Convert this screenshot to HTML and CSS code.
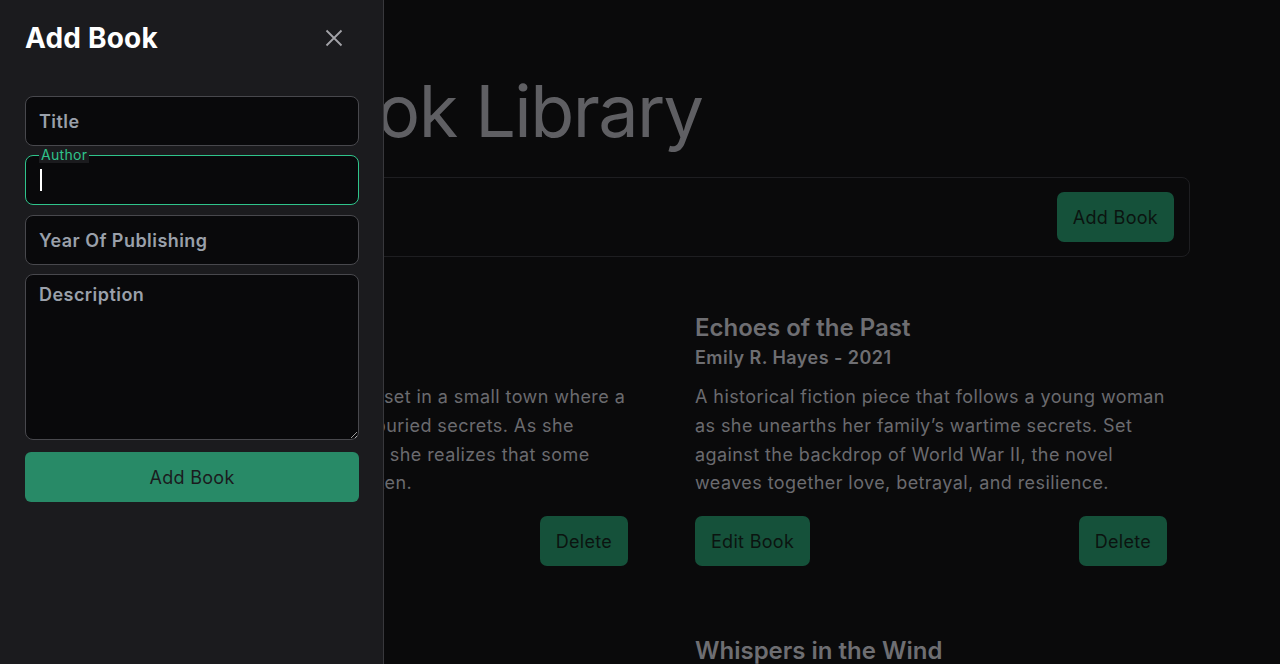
FILE: index.html
```html
<!DOCTYPE html>
<html lang="en">
<head>
<meta charset="utf-8">
<title>Book Library</title>
<link rel="stylesheet" href="styles.css">
</head>
<body>
<main class="page">
  <h1 class="page-title">Book Library</h1>
  <div class="toolbar">
    <button class="btn btn-dim">Add Book</button>
  </div>
  <section class="books">
    <article class="book">
      <h2 class="book-title">Silent Hollow</h2>
      <p class="book-meta">Mark Thompson - 2019</p>
      <p class="book-desc">A gripping mystery novel set in a small town where a journalist uncovers long buried secrets. As she delves into the mysteries, she realizes that some truths are best left forgotten.</p>
      <div class="book-actions">
        <button class="btn btn-dim">Edit Book</button>
        <button class="btn btn-dim">Delete</button>
      </div>
    </article>
    <article class="book">
      <h2 class="book-title">Echoes of the Past</h2>
      <p class="book-meta">Emily R. Hayes - 2021</p>
      <p class="book-desc">A historical fiction piece that follows a young woman as she unearths her family’s wartime secrets. Set against the backdrop of World War II, the novel weaves together love, betrayal, and resilience.</p>
      <div class="book-actions">
        <button class="btn btn-dim">Edit Book</button>
        <button class="btn btn-dim">Delete</button>
      </div>
    </article>
    <article class="book">
      <h2 class="book-title">Midnight Tide</h2>
      <p class="book-meta">Daniel K. Moore - 2018</p>
      <p class="book-desc">A tale of a lighthouse keeper on a remote island.</p>
    </article>
    <article class="book">
      <h2 class="book-title">Whispers in the Wind</h2>
      <p class="book-meta">Sarah L. Bennett - 2020</p>
      <p class="book-desc">A poetic story of loss and hope.</p>
    </article>
  </section>
</main>

<aside class="drawer">
  <header class="drawer-head">
    <h2 class="drawer-title">Add Book</h2>
    <button class="close" aria-label="Close">
      <svg width="18" height="18" viewBox="0 0 18 18"><path d="M1.5 1.5 L16.5 16.5 M16.5 1.5 L1.5 16.5" stroke="#a3a3a8" stroke-width="1.8" fill="none"/></svg>
    </button>
  </header>
  <form class="form">
    <input class="field" type="text" placeholder="Title">
    <div class="field-wrap">
      <span class="field-label">Author</span>
      <div class="field field-focus"><span class="caret"></span></div>
    </div>
    <input class="field field-year" type="text" placeholder="Year Of Publishing">
    <textarea class="field area" placeholder="Description"></textarea>
    <button type="button" class="btn btn-submit">Add Book</button>
  </form>
</aside>
</body>
</html>
```

FILE: styles.css
```css
* { box-sizing: border-box; }
html, body { margin: 0; padding: 0; }
body {
  background: #0a0a0b;
  font-family: Inter, "Noto Sans", sans-serif;
  color: #6b6b6f;
  height: 664px;
  overflow: hidden;
}
.page {
  width: 1100px;
  margin: 0 auto;
  padding-top: 63px;
}
.page-title {
  margin: 0 0 18px 200px;
  font-size: 72px;
  font-weight: 400;
  line-height: 96px;
  color: #5f5f63;
  letter-spacing: -1.6px;
}
.toolbar {
  height: 80px;
  border: 1px solid #1e1e21;
  border-radius: 8px;
  display: flex;
  justify-content: flex-end;
  align-items: center;
  padding: 0 15px;
}
.btn {
  font-family: inherit;
  font-size: 18px;
  letter-spacing: 0.3px;
  border: none;
  border-radius: 7px;
  height: 50px;
  padding: 0 16px;
  cursor: pointer;
}
.btn-dim {
  background: #15513a;
  color: #0b1410;
}
.books {
  display: grid;
  grid-template-columns: 472px 472px;
  column-gap: 67px;
  row-gap: 69px;
  padding: 55px 0 0 66px;
}
.book-title {
  margin: 0;
  font-size: 24px;
  font-weight: 600;
  line-height: 32px;
  color: #6e6e72;
}
.book-meta {
  margin: 1px 0 0;
  font-size: 18px;
  font-weight: 600;
  line-height: 26px;
  letter-spacing: 0.45px;
  color: #6e6e72;
}
.book-desc {
  margin: 12px 0 0;
  font-size: 18px;
  line-height: 28.8px;
  letter-spacing: 0.42px;
  color: #6b6b6f;
}
.book-actions {
  display: flex;
  justify-content: space-between;
  margin-top: 18px;
}

/* drawer */
.drawer {
  position: fixed;
  left: 0; top: 0; bottom: 0;
  width: 384px;
  background: #1b1b1e;
  border-right: 1px solid #38383c;
  padding: 0 24px 0 25px;
}
.drawer-head {
  display: flex;
  align-items: center;
  justify-content: space-between;
  height: 76px;
}
.drawer-title {
  margin: 0;
  font-size: 28px;
  font-weight: 700;
  letter-spacing: 0.2px;
  color: #ffffff;
}
.close {
  background: none;
  border: none;
  padding: 0;
  margin-right: 16px;
  width: 18px; height: 18px;
  display: flex;
}
.form {
  display: flex;
  flex-direction: column;
  gap: 9px;
  margin-top: 20px;
  width: 334px;
}
.field {
  display: block;
  width: 100%;
  height: 50px;
  background: #09090b;
  border: 1px solid #48484d;
  border-radius: 8px;
  padding: 0 13px;
  font-family: inherit;
  font-size: 18px;
  font-weight: 600;
  letter-spacing: 0.45px;
  color: #e5e5e5;
  outline: none;
}
.field::placeholder { color: #9aa0aa; opacity: 1; }
.field-year { margin-top: 1px; }
.field-wrap { position: relative; }
.field-focus {
  border-color: #2fc48b;
  display: flex;
  align-items: center;
  padding-left: 14px;
}
.caret {
  display: block;
  width: 2px;
  height: 22px;
  background: #ffffff;
}
.field-label {
  position: absolute;
  left: 14px;
  top: -8px;
  padding: 0 2px;
  font-size: 14px;
  line-height: 16px;
  letter-spacing: 0.3px;
  color: #2fc48b;
  background: #1b1b1e;
}
.area {
  height: 166px;
  padding-top: 9px;
  resize: vertical;
}
.btn-submit {
  width: 100%;
  margin-top: 3px;
  background: #288a67;
  color: #1b1b1e;
  border-radius: 6px;
}
```
